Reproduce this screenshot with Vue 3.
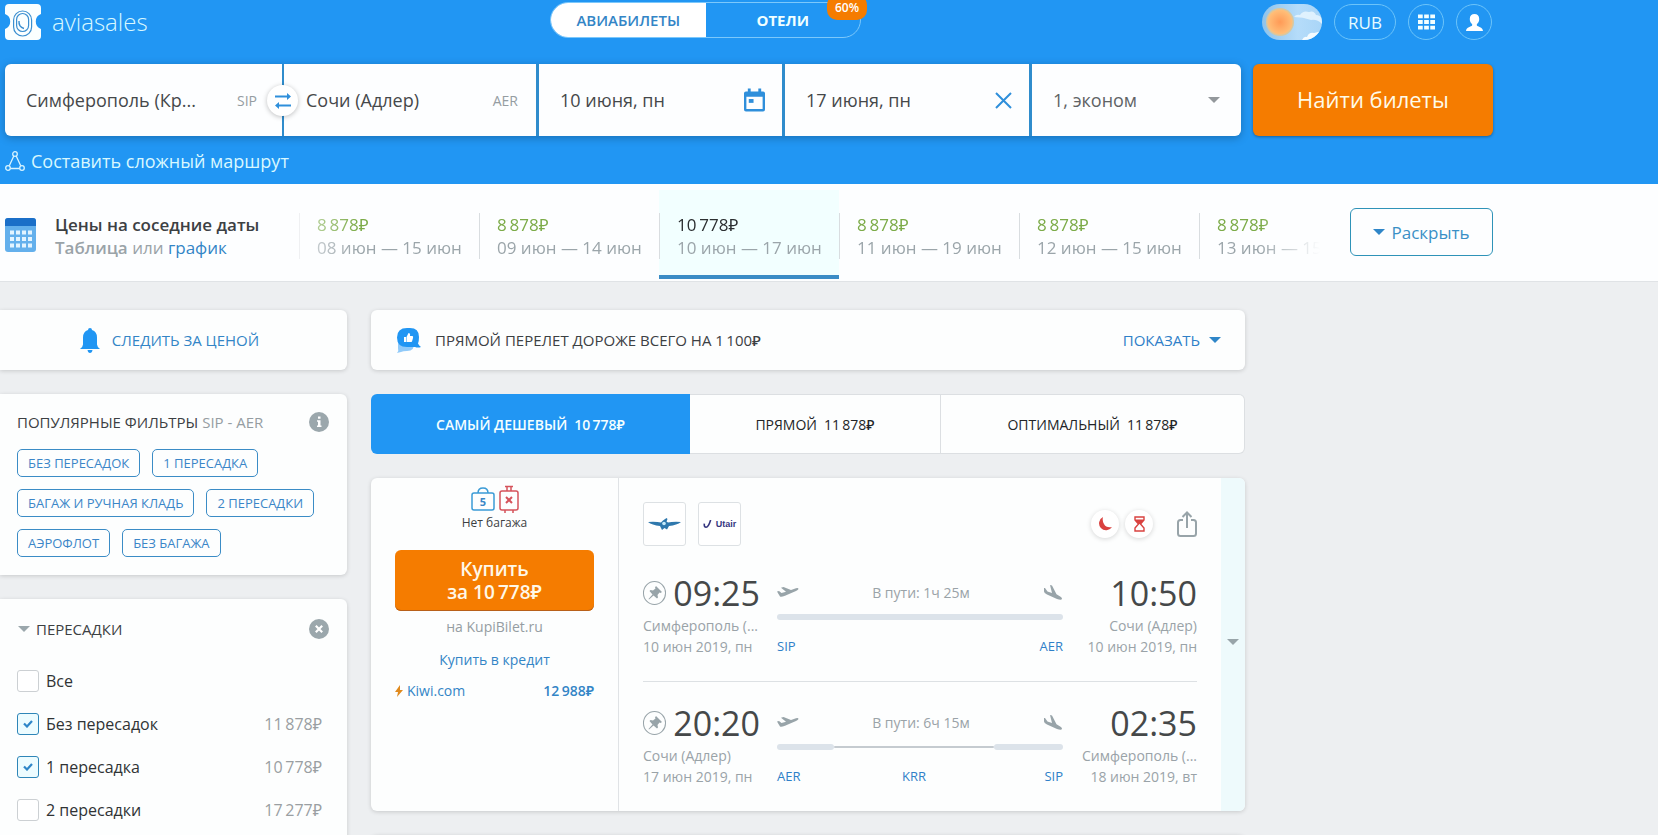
<script setup>
import { ref } from 'vue'

const rub = (n) => n.replace(' ', '\u2009') + '₽'

const nearby = [
  { price: '8 878', dates: '08 июн — 15 июн' },
  { price: '8 878', dates: '09 июн — 14 июн' },
  { price: '10 778', dates: '10 июн — 17 июн', active: true },
  { price: '8 878', dates: '11 июн — 19 июн' },
  { price: '8 878', dates: '12 июн — 15 июн' },
  { price: '8 878', dates: '13 июн — 15' },
]

const chips = ['Без пересадок', '1 пересадка', 'Багаж и ручная кладь', '2 пересадки', 'Аэрофлот', 'Без багажа']

const stops = ref([
  { id: 'all', label: 'Все', price: '', on: false },
  { id: 's0', label: 'Без пересадок', price: '11 878', on: true },
  { id: 's1', label: '1 пересадка', price: '10 778', on: true },
  { id: 's2', label: '2 пересадки', price: '17 277', on: false },
])

const sorts = [
  { name: 'Самый дешевый', price: '10 778', kind: 'cheap' },
  { name: 'Прямой', price: '11 878', kind: 'direct' },
  { name: 'Оптимальный', price: '11 878', kind: 'best' },
]

const segments = [
  {
    from: { time: '09:25', city: 'Симферополь (...', date: '10 июн 2019, пн' },
    to: { time: '10:50', city: 'Сочи (Адлер)', date: '10 июн 2019, пн' },
    duration: 'В пути: 1ч 25м',
    legs: [{ share: 286 }],
    codes: ['SIP', 'AER'],
  },
  {
    from: { time: '20:20', city: 'Сочи (Адлер)', date: '17 июн 2019, пн' },
    to: { time: '02:35', city: 'Симферополь (...', date: '18 июн 2019, вт' },
    duration: 'В пути: 6ч 15м',
    legs: [{ share: 57 }, { share: 160, wait: true }, { share: 69 }],
    codes: ['AER', 'KRR', 'SIP'],
  },
]

const codeColumns = (s) =>
  s.legs.length > 1 ? s.legs.map((l) => `minmax(0, ${l.share}fr)`).join(' ') : '1fr 1fr'

const origin = ref('Симферополь (Кр...')
const destination = ref('Сочи (Адлер)')
const depart = ref('10 июня, пн')
const back = ref('17 июня, пн')
</script>

<template>
  <div class="page">
    <header class="header">
      <div class="wrap">
        <div class="topbar">
          <a class="logo" href="#">
            <svg width="36" height="36" viewBox="0 0 36 36" aria-hidden="true">
              <path d="M4 0H32Q36 0 36 4V10A8 8 0 0 0 36 25V32Q36 36 32 36H4Q0 36 0 32V25A8 8 0 0 0 0 10V4Q0 0 4 0Z" fill="#fbffff" />
              <rect x="8.600" y="7" width="18" height="25" rx="9" fill="none" stroke="#3b8fd0" stroke-width="1.200" />
              <rect x="11.600" y="9.500" width="12" height="18" rx="6" fill="none" stroke="#3b8fd0" stroke-width="1.200" />
              <path d="M14 17q-.5 6 5 7.500" fill="none" stroke="#3b8fd0" stroke-width="1.400" />
            </svg>
            <span>aviasales</span>
          </a>
          <nav class="switch">
            <a class="switch-item on" href="#">АВИАБИЛЕТЫ</a>
            <a class="switch-item" href="#">ОТЕЛИ</a>
            <span class="badge">60%</span>
          </nav>
          <div class="tools">
            <button class="theme" type="button" aria-label="Тема">
              <svg width="60" height="36" viewBox="0 0 60 36">
                <defs>
                  <radialGradient id="sun"><stop offset="0" stop-color="#ff9a56" /><stop offset="1" stop-color="#ffc07a" /></radialGradient>
                  <linearGradient id="sky" x1="0" x2="1" y1="0" y2="0"><stop offset="0" stop-color="#8fc3ea" /><stop offset=".6" stop-color="#b5dcfa" /><stop offset="1" stop-color="#a9d5f7" /></linearGradient>
                  <clipPath id="pill"><rect width="60" height="36" rx="18" /></clipPath>
                </defs>
                <g clip-path="url(#pill)">
                  <rect width="60" height="36" fill="url(#sky)" />
                  <path d="M32 13q2-3 6-2q3-5 9-3q5-2 7 3q4 0 6 4v5q-5-5-11-4q-8-3-17-3z" fill="#e4f4fe" opacity=".9" />
                  <path d="M40 36q2-4 5-3q2-5 7-4l8-2v9z" fill="#f4fbff" />
                  <circle cx="18" cy="18" r="14" fill="#d9c79f" />
                  <circle cx="18" cy="18" r="12.500" fill="url(#sun)" />
                </g>
              </svg>
            </button>
            <button class="currency" type="button">RUB</button>
            <button class="round" type="button" aria-label="Сервисы">
              <svg width="17" height="16" viewBox="0 0 18 16" fill="#f4ffff">
                <path d="M0 0h5v4H0zM6.500 0h5v4h-5zM13 0h5v4h-5zM0 6h5v4H0zM6.500 6h5v4h-5zM13 6h5v4h-5zM0 12h5v4H0zM6.500 12h5v4h-5zM13 12h5v4h-5z" />
              </svg>
            </button>
            <button class="round" type="button" aria-label="Профиль">
              <svg width="17" height="17" viewBox="0 0 18 18" fill="#fff">
                <path d="M9 0c3 0 5 2 5 5.200c0 2.500-1 4.300-2.500 5.500v1.600c1 1.200 6 1.700 6.500 5.700H0c.5-4 5.500-4.500 6.500-5.700v-1.600C5 9.500 4 7.700 4 5.200C4 2 6 0 9 0z" />
              </svg>
            </button>
          </div>
        </div>

        <form class="search" @submit.prevent>
          <div class="fields">
            <label class="field"><input v-model="origin" aria-label="Откуда" /><span class="iata">SIP</span></label>
            <label class="field field-to"><input v-model="destination" aria-label="Куда" /><span class="iata">AER</span></label>
            <label class="field field-date">
              <input v-model="depart" aria-label="Туда" />
              <svg width="21" height="24" viewBox="0 0 22 24">
                <path d="M4 0h3v3h8V0h3v3h2q2 0 2 2v17q0 2-2 2H2q-2 0-2-2V5q0-2 2-2h2zM2.500 8.500v13h17v-13z" fill="#2f8fdb" fill-rule="evenodd" />
                <rect x="5" y="11" width="5" height="4" fill="#2f8fdb" />
              </svg>
            </label>
            <label class="field field-date">
              <input v-model="back" aria-label="Обратно" />
              <svg width="17" height="17" viewBox="0 0 17 17"><path d="M1 1L16 16M16 1L1 16" stroke="#2f8fdb" stroke-width="2" /></svg>
            </label>
            <label class="field field-who">
              <select aria-label="Пассажиры"><option>1, эконом</option></select>
              <svg width="12" height="6" viewBox="0 0 12 6"><path d="M0 0h12L6 6z" fill="#93989c" /></svg>
            </label>
            <button class="swap" type="button" aria-label="Поменять местами">
              <svg width="16" height="16" viewBox="0 0 16 16" fill="#2f8fdb">
                <path d="M0 2.500h12V0l4 3.500L12 7V4.500H0zM16 11.500H4V9L0 12.500L4 16v-2.500h12z" />
              </svg>
            </button>
          </div>
          <button class="find" type="submit">Найти билеты</button>
        </form>

        <a class="complex" href="#">
          <svg width="20" height="20" viewBox="0 0 20 20" fill="none" stroke="#d8f4ff" stroke-width="1.300">
            <circle cx="10" cy="3" r="2.300" /><circle cx="3" cy="17" r="2.300" /><circle cx="17" cy="17" r="2.300" />
            <path d="M8.800 5L4.300 14.800M11.200 5L15.700 14.800M5.500 17.500h9" />
          </svg>
          <span>Составить сложный маршрут</span>
        </a>
      </div>
    </header>

    <section class="dates">
      <div class="wrap dates-row">
        <svg class="cal" width="31" height="34" viewBox="0 0 31 34">
          <rect width="31" height="34" rx="3" fill="#64b0ec" />
          <path d="M3 0H28Q31 0 31 3V8H0V3Q0 0 3 0Z" fill="#1b6fc8" />
          <path d="M5 14.500H27M5 21H27M5 27.500H27" stroke="#e3f4ff" stroke-width="4" stroke-dasharray="4 2" />
        </svg>
        <div class="dates-title">
          <strong>Цены на соседние даты</strong>
          <p><b>Таблица</b> или <a href="#">график</a></p>
        </div>
        <div class="dates-list">
          <button v-for="d in nearby" :key="d.dates" type="button" class="date" :class="{ active: d.active }">
            <span class="date-in"><span class="date-price">{{ rub(d.price) }}</span><span>{{ d.dates }}</span></span>
          </button>
        </div>
        <button class="expand" type="button">
          <svg width="12" height="6" viewBox="0 0 12 6"><path d="M0 0h12L6 6z" fill="#2f86c8" /></svg>
          Раскрыть
        </button>
      </div>
    </section>

    <main class="content">
      <aside class="side">
        <button class="card watch" type="button">
          <svg width="20" height="25" viewBox="0 0 20 25" fill="#2196f3">
            <path d="M10 0q2 0 2 2q5 1.500 5 7.500v7q0 2 3 4.500H0q3-2.500 3-4.500v-7Q3 3.500 8 2q0-2 2-2zM7.500 22h5q-.5 3-2.500 3t-2.500-3z" />
          </svg>
          СЛЕДИТЬ ЗА ЦЕНОЙ
        </button>

        <section class="card popular">
          <div class="card-head">
            <h2>ПОПУЛЯРНЫЕ ФИЛЬТРЫ <span>SIP - AER</span></h2>
            <button class="dot" type="button" aria-label="Справка">
              <svg width="20" height="20" viewBox="0 0 20 20"><circle cx="10" cy="10" r="10" fill="#9ba7ac" /><path d="M9 4.500h2.500v2.200H9zM8 8.300h3.500v5.200h1V15H8v-1.500h1V9.800H8z" fill="#fff" /></svg>
            </button>
          </div>
          <div class="chips">
            <button v-for="c in chips" :key="c" type="button" class="chip">{{ c.toUpperCase() }}</button>
          </div>
        </section>

        <section class="card stops">
          <div class="card-head">
            <svg width="12" height="6" viewBox="0 0 12 6"><path d="M0 0h12L6 6z" fill="#9ba7ac" /></svg>
            <h2>ПЕРЕСАДКИ</h2>
            <button class="dot" type="button" aria-label="Сбросить">
              <svg width="20" height="20" viewBox="0 0 20 20"><circle cx="10" cy="10" r="10" fill="#9ba7ac" /><path d="M6.800 6.800l6.400 6.400M13.200 6.800l-6.400 6.400" stroke="#fff" stroke-width="2.200" /></svg>
            </button>
          </div>
          <div v-for="s in stops" :key="s.id" class="stop">
            <span class="box">
              <input :id="s.id" v-model="s.on" type="checkbox" />
              <svg v-if="s.on" width="10" height="8" viewBox="0 0 10 8"><path d="M1 3.500L4 6.500L9 1" fill="none" stroke="#2f86c8" stroke-width="2.200" /></svg>
            </span>
            <label :for="s.id">{{ s.label }}</label>
            <span v-if="s.price" class="stop-price">{{ rub(s.price) }}</span>
          </div>
        </section>
      </aside>

      <div class="results">
        <section class="card notice">
          <svg width="25" height="25" viewBox="0 0 25 25">
            <path d="M2 14h16q1 9-7 9q-4 0-6 1l-4 1q2-2 1-5z" fill="#90caf9" />
            <path d="M11 0h3q9 0 9 9q0 4-1 6.500q1 2 3 3.500q-3 1-6 0H11Q1 19 1 9.500T11 0z" fill="#2196f3" />
            <path d="M8 9h2v5H8zM10.500 9L12.500 5q2 0 1.500 3h2.500q1 .5.500 2l-1 3.500q-.5.500-1.500.5h-4z" fill="#fff" />
          </svg>
          <span class="notice-text">ПРЯМОЙ ПЕРЕЛЕТ ДОРОЖЕ ВСЕГО НА {{ rub('1 100') }}</span>
          <button class="show" type="button">
            ПОКАЗАТЬ
            <svg width="12" height="6" viewBox="0 0 12 6"><path d="M0 0h12L6 6z" fill="#2f86c8" /></svg>
          </button>
        </section>

        <div class="sorts">
          <button v-for="s in sorts" :key="s.kind" type="button" class="sort" :class="s.kind">
            <span>{{ s.name.toUpperCase() }}</span><span>{{ rub(s.price) }}</span>
          </button>
        </div>

        <article class="card ticket">
          <div class="offer">
            <div class="bags">
              <svg width="24" height="24" viewBox="0 0 24 24" fill="none" stroke="#3a9bd6" stroke-width="1.500">
                <rect x="1" y="6" width="22" height="17" rx="2" /><path d="M7 6q0-5 5-5t5 5" />
                <text x="12" y="18.500" text-anchor="middle" class="bag-num">5</text>
              </svg>
              <svg width="20" height="28" viewBox="0 0 20 28" fill="none" stroke="#d5535b" stroke-width="1.500">
                <rect x="1" y="6" width="18" height="19" rx="2" /><path d="M6 1.500h8M8 2v4M12 2v4M6 25v3M14 25v3" /><path d="M7 12l6 6M13 12l-6 6" stroke-width="2" />
              </svg>
            </div>
            <p class="nobag">Нет багажа</p>
            <button class="buy" type="button">Купить<br />за {{ rub('10 778') }}</button>
            <p class="agent">на KupiBilet.ru</p>
            <a class="credit" href="#">Купить в кредит</a>
            <a class="alt" href="#">
              <svg width="8" height="12" viewBox="0 0 8 12"><path d="M5 0L0 7h3L2 12L8 5H5z" fill="#e08a1e" /></svg>
              <span>Kiwi.com</span>
              <span class="alt-price">{{ rub('12 988') }}</span>
            </a>
          </div>

          <div class="flight">
            <div class="flight-head">
              <span class="airline">
                <svg width="33" height="12" viewBox="0 0 33 12" fill="#2f78ad">
                  <path d="M0 4q8-.5 13 .5L15 2.500L18.500 0l1 1l-1 2.500l1.500 1q5-1 13-.5q-4 3-12 4l-2 3.500l-2.500-1.500L14 12l-2-4Q4 7 0 4z" />
                  <circle cx="16" cy="5.500" r="1.800" fill="#c8ecfb" />
                </svg>
              </span>
              <span class="airline utair">
                <svg width="9" height="9" viewBox="0 0 10 10" fill="none" stroke="#35357f" stroke-width="1.800"><path d="M1.500 4q-.5 4 2 4T8.500 0" /></svg>
                Utair
              </span>
              <span class="marks">
                <span class="mark">
                  <svg width="14" height="14" viewBox="0 0 14 14"><path d="M5 0A7 7 0 1 0 14 10Q8 11 6 7Q4 4 5 0z" fill="#d9413f" /></svg>
                </span>
                <span class="mark">
                  <svg width="11" height="16" viewBox="0 0 11 16"><path d="M1 1H10V4L6.500 8L10 12V15H1V12L4.500 8L1 4z" fill="#fff" stroke="#d9413f" stroke-width="1.400" /><path d="M1 3.500H10L6.500 8h-2z" fill="#d9413f" /></svg>
                </span>
              </span>
              <button class="share" type="button" aria-label="Поделиться">
                <svg width="20" height="26" viewBox="0 0 20 26" fill="none" stroke="#98a4a9" stroke-width="2">
                  <path d="M6 9H3.500Q1 9 1 11.500V22.500Q1 25 3.500 25H16.500Q19 25 19 22.500V11.500Q19 9 16.500 9H14M10 17V2M5.500 6L10 1.500L14.500 6" />
                </svg>
              </button>
            </div>

            <div v-for="(s, i) in segments" :key="i" class="segment">
              <div class="point">
                <div class="time">
                  <button class="pin" type="button" aria-label="Закрепить">
                    <svg width="14" height="14" viewBox="0 0 14 14" fill="#98a4a9"><path d="M8 0L14 6L12.500 7L11.500 6.500L9.500 9L10 11.500L9 12.500L5.500 9.500L1 13.500L.5 13L4.500 8.500L1.500 5L2.500 4L5 4.500L7.500 2.500L7 1.500z" /></svg>
                  </button>
                  <span>{{ s.from.time }}</span>
                </div>
                <p>{{ s.from.city }}</p>
                <p>{{ s.from.date }}</p>
              </div>
              <div class="path">
                <div class="path-top">
                  <svg width="22" height="11" viewBox="0 0 22 11" fill="#98a4a9"><path d="M0 4.500L2 4L4.500 6L9 4.700L4 .8L6.500 0L14 3L19 1.200Q21.500.6 21.500 2Q21 3.200 19 4L8 8.800Q4 10.500 3 9.500z" /></svg>
                  <span>{{ s.duration }}</span>
                  <svg width="20" height="16" viewBox="0 0 20 16" fill="#98a4a9"><path d="M1 3L2 3L4.500 6.500L9 8L7 0L9 .6L13.500 9.300L18 12Q20 14 18 14.800Q16.500 15 14 14L4 9.500Q1 8 1 6.500z" /></svg>
                </div>
                <div class="legs">
                  <span v-for="(l, k) in s.legs" :key="k" class="leg" :class="{ wait: l.wait }" :style="{ flexGrow: l.share }"></span>
                </div>
                <div class="codes" :style="{ gridTemplateColumns: codeColumns(s) }"><span v-for="c in s.codes" :key="c">{{ c }}</span></div>
              </div>
              <div class="point end">
                <div class="time"><span>{{ s.to.time }}</span></div>
                <p>{{ s.to.city }}</p>
                <p>{{ s.to.date }}</p>
              </div>
            </div>
          </div>

          <button class="more" type="button" aria-label="Подробнее">
            <svg width="12" height="6" viewBox="0 0 12 6"><path d="M0 0h12L6 6z" fill="#98a4a9" /></svg>
          </button>
        </article>

        <article class="card next"></article>
      </div>
    </main>
  </div>
</template>

<style>
body {
  margin: 0;
  background: #edeff1;
}
</style>

<style scoped>
.page,
.page button,
.page input,
.page select {
  font-family: "Open Sans", "Noto Sans", sans-serif;
}
.page {
  height: 100vh;
  overflow: hidden;
  background: #edeff1;
  color: #3c4043;
}
.page *,
.page *::before,
.page *::after {
  box-sizing: border-box;
}
p, h2 {
  margin: 0;
}
a {
  text-decoration: none;
  color: #3385c6;
}
button {
  border: 0;
  background: none;
  padding: 0;
  margin: 0;
  cursor: pointer;
  color: inherit;
}
svg {
  display: block;
  flex: none;
}
.wrap {
  max-width: 1493px;
  padding-left: 5px;
}

.header {
  background: #2196f3;
  padding-bottom: 10px;
}
.topbar {
  display: grid;
  grid-template-columns: 545px 311px 1fr;
  align-items: center;
  height: 64px;
  padding: 0 1px 20px 0;
}
.logo {
  display: flex;
  align-items: center;
  gap: 11px;
  color: #d8f8ff;
  font-size: 24px;
  line-height: 32px;
  font-weight: 300;
}
.switch {
  position: relative;
  display: flex;
  height: 36px;
  margin-bottom: 4px;
  border: 1px solid #7cc8fb;
  border-radius: 18px;
}
.switch-item {
  flex: 1;
  display: flex;
  align-items: center;
  justify-content: center;
  color: #f0ffff;
  font-size: 15px;
  font-weight: 700;
}
.switch-item.on {
  background: #fff;
  color: #3385c6;
  border-radius: 18px 0 0 18px;
  font-weight: 600;
}
.badge {
  position: absolute;
  right: -7px;
  top: -8px;
  width: 40px;
  height: 25px;
  border-radius: 10px;
  background: #f57c00;
  color: #fff;
  font-size: 12px;
  font-weight: 600;
  line-height: 26px;
  text-align: center;
}
.tools {
  display: flex;
  justify-content: flex-end;
  gap: 12px;
}
.currency,
.round {
  display: flex;
  align-items: center;
  justify-content: center;
  height: 36px;
  width: 36px;
  border: 1px solid #6cc4fa;
  border-radius: 18px;
  color: #e8fcff;
}
.currency {
  width: 62px;
  font-size: 17px;
  font-weight: 500;
}

.search {
  display: flex;
  gap: 12px;
  height: 72px;
}
.fields {
  position: relative;
  flex: 1;
  display: grid;
  grid-template-columns: 277fr 254fr 246fr 247fr 212fr;
  background: #2f8ccc;
  border-radius: 6px;
  box-shadow: 0 2px 8px rgba(0, 0, 0, 0.25);
  overflow: hidden;
}
.field {
  display: flex;
  align-items: center;
  min-width: 0;
  padding: 0 25px 0 21px;
  background: #fdfeff;
}
.field-to {
  margin-left: 2px;
  padding-left: 22px;
  padding-right: 18px;
}
.field-date,
.field-who {
  margin-left: 3px;
  padding-right: 17px;
}
.field-who {
  padding-right: 21px;
}
.field input,
.field select {
  flex: 1;
  min-width: 0;
  width: 0;
  padding: 0;
  border: 0;
  outline: 0;
  background: none;
  appearance: none;
  color: #45484a;
  font-size: 18px;
  line-height: 26px;
}
.field select {
  color: #606365;
}
.iata {
  color: #959da2;
  font-size: 14px;
}
.swap {
  position: absolute;
  left: 262px;
  top: 21px;
  display: flex;
  align-items: center;
  justify-content: center;
  width: 31px;
  height: 31px;
  border-radius: 50%;
  background: #fff;
  box-shadow: 0 1px 5px rgba(0, 0, 0, 0.25);
}
.find {
  width: 240px;
  padding-bottom: 2px;
  border-radius: 6px;
  background: #f57c00;
  box-shadow: 0 1px 3px rgba(0, 0, 0, 0.35);
  color: #fffbe8;
  font-size: 22px;
}
.complex {
  display: flex;
  width: fit-content;
  align-items: center;
  gap: 6px;
  height: 26px;
  margin-top: 12px;
  color: #d8f8ff;
  font-size: 18px;
}

.dates {
  background: #fdfeff;
  border-bottom: 1px solid #e0e3e6;
}
.dates-row {
  display: flex;
  align-items: center;
  height: 97px;
}
.cal {
  margin-top: 5px;
}
.dates-title {
  width: 263px;
  padding: 6px 0 0 19px;
  flex: none;
  font-size: 17px;
  line-height: 23px;
  white-space: nowrap;
}
.dates-title strong {
  font-weight: 600;
}
.dates-title p {
  color: #9aa3a8;
}
.dates-title b {
  font-weight: 600;
}
.dates-list {
  flex: 1;
  min-width: 0;
  display: flex;
  height: 97px;
  overflow: hidden;
  mask-image: linear-gradient(90deg, rgba(0, 0, 0, 0.4), #000 60px, #000 calc(100% - 60px), transparent);
}
.date {
  flex: none;
  display: flex;
  align-items: flex-start;
  width: 180px;
  margin: 6px 0 2px;
  padding-top: 23px;
  border-bottom: 4px solid transparent;
  color: #9ba5aa;
  font-size: 17px;
  line-height: 23px;
  text-align: left;
}
.date-in {
  display: flex;
  flex-direction: column;
  padding-left: 17px;
  border-left: 1px solid #d9dde0;
  white-space: nowrap;
}
.date-price {
  color: #7cab48;
}
.date.active {
  background: #f2ffff;
  border-color: #3b8cc6;
}
.date.active .date-price {
  color: #2c2f31;
}
.expand {
  flex: none;
  display: flex;
  align-items: center;
  justify-content: center;
  gap: 6px;
  width: 143px;
  height: 48px;
  margin: 0 0 1px 30px;
  border: 1px solid #2f93b8;
  border-radius: 6px;
  color: #3a90c6;
  font-size: 17px;
}

.content {
  display: flex;
  align-items: flex-start;
  gap: 24px;
  max-width: 1245px;
  padding-top: 28px;
}
.side {
  flex: none;
  width: 347px;
  display: flex;
  flex-direction: column;
  gap: 24px;
}
.results {
  flex: 1;
  min-width: 0;
  display: flex;
  flex-direction: column;
  gap: 24px;
}
.card {
  background: #fdfefe;
  border-radius: 6px;
  box-shadow: 0 1px 4px rgba(0, 0, 0, 0.16);
}
.side .card {
  border-radius: 0 6px 6px 0;
}
.watch {
  display: flex;
  align-items: center;
  justify-content: center;
  gap: 12px;
  height: 60px;
  padding-right: 8px;
  color: #3385c6;
  font-size: 15px;
}
.popular {
  padding: 18px 18px 18px 17px;
}
.card-head {
  display: flex;
  align-items: center;
}
.card-head h2 {
  flex: 1;
  font-size: 15px;
  line-height: 20px;
  font-weight: 400;
}
.card-head h2 span {
  color: #959da2;
}
.chips {
  display: flex;
  flex-wrap: wrap;
  gap: 12px;
  margin-top: 17px;
}
.chip {
  height: 28px;
  padding: 0 10px;
  border: 1px solid #3b8cc6;
  border-radius: 5px;
  color: #3b86c8;
  font-size: 13px;
}
.stops {
  padding: 20px 18px 24px 17px;
}
.stops .card-head {
  gap: 6px;
  padding-left: 1px;
  margin-bottom: 20px;
}
.stop {
  display: flex;
  align-items: center;
  gap: 7px;
  height: 43px;
  padding-right: 7px;
  color: #303335;
  font-size: 16px;
}
.box {
  display: grid;
  place-items: center;
}
.box > * {
  grid-area: 1 / 1;
}
.box svg {
  pointer-events: none;
}
.box input {
  appearance: none;
  width: 22px;
  height: 22px;
  margin: 0;
  border: 1px solid #ccd0d3;
  border-radius: 3px;
  background: #fff;
}
.box input:checked {
  border-color: #2f86b8;
  background: #edfcff;
}
.stop label {
  flex: 1;
}
.stop-price {
  color: #9a9fa2;
}

.notice {
  display: flex;
  align-items: center;
  height: 60px;
  padding: 0 24px 0 25px;
  font-size: 15px;
}
.notice-text {
  flex: 1;
  margin-left: 14px;
  font-weight: 500;
}
.show {
  display: flex;
  align-items: center;
  gap: 9px;
  color: #2f80c8;
  font-size: 15px;
  font-weight: 500;
}
.sorts {
  display: grid;
  grid-template-columns: 319fr 251fr 304fr;
  height: 60px;
}
.sort {
  display: flex;
  align-items: center;
  justify-content: center;
  gap: 7px;
  border: 1px solid #dcdfe2;
  border-left: 0;
  background: #fdfefe;
  color: #222527;
  font-size: 14px;
  font-weight: 500;
}
.sort.cheap {
  border: 0;
  border-radius: 6px 0 0 6px;
  background: #2196f3;
  color: #f4ffff;
  font-weight: 600;
}
.sort.best {
  border-radius: 0 6px 6px 0;
}

.ticket {
  display: flex;
  overflow: hidden;
}
.offer {
  flex: none;
  width: 248px;
  padding: 7px 24px 0;
  border-right: 1px solid #e0e3e6;
  display: flex;
  flex-direction: column;
  text-align: center;
  font-size: 14px;
  line-height: 22px;
}
.bags {
  display: flex;
  justify-content: center;
  align-items: center;
  gap: 4px;
  height: 28px;
}
.bag-num {
  fill: #3a86c6;
  stroke: none;
  font-size: 11px;
  font-weight: 700;
}
.nobag {
  margin-top: 2px;
  font-size: 12px;
  line-height: 16px;
}
.buy {
  margin-top: 19px;
  height: 61px;
  border-radius: 6px;
  background: #f57c00;
  box-shadow: inset 0 -1px 0 #b8601a;
  color: #fff8e8;
  font-size: 19px;
  font-weight: 600;
  line-height: 23px;
}
.agent {
  margin-top: 5px;
  color: #959da2;
}
.credit {
  margin-top: 11px;
}
.alt {
  display: flex;
  align-items: center;
  gap: 4px;
  margin-top: 9px;
}
.alt-price {
  margin-left: auto;
  font-weight: 600;
}
.flight {
  flex: 1;
  min-width: 0;
  padding: 24px;
}
.flight-head {
  display: flex;
  align-items: center;
  height: 44px;
  margin-bottom: 23px;
}
.airline {
  display: flex;
  align-items: center;
  justify-content: center;
  gap: 4px;
  width: 43px;
  height: 44px;
  margin-right: 12px;
  border: 1px solid #dde1e4;
  border-radius: 3px;
  background: #fff;
}
.utair {
  color: #35357f;
  font-family: "Liberation Sans", sans-serif;
  font-size: 9px;
  font-weight: 700;
}
.marks {
  display: flex;
  gap: 6px;
  margin-left: auto;
}
.mark {
  display: flex;
  align-items: center;
  justify-content: center;
  width: 28px;
  height: 28px;
  border-radius: 50%;
  background: #fff;
  box-shadow: 0 1px 5px rgba(0, 0, 0, 0.16);
}
.share {
  margin-left: 24px;
}
.segment {
  display: grid;
  grid-template-columns: 117px minmax(0, 1fr) 117px;
  column-gap: 17px;
  color: #9aa3a8;
  font-size: 14px;
  line-height: 21px;
  white-space: nowrap;
}
.segment + .segment {
  margin-top: 24px;
  padding-top: 17px;
  border-top: 1px solid #dde1e4;
}
.time {
  display: flex;
  align-items: center;
  gap: 7px;
  height: 46px;
  padding-top: 2px;
  color: #454849;
  font-size: 34px;
}
.pin {
  display: flex;
  align-items: center;
  justify-content: center;
  width: 24px;
  height: 24px;
  border: 1px solid #98a4a9;
  border-radius: 50%;
}
.end {
  text-align: right;
}
.end .time {
  justify-content: flex-end;
}
.path-top {
  display: flex;
  align-items: center;
  justify-content: space-between;
  height: 45px;
  padding-top: 2px;
}
.legs {
  display: flex;
  align-items: center;
  height: 6px;
}
.leg {
  flex-basis: 0;
  height: 6px;
  border-radius: 3px;
  background: #dce3ea;
}
.leg.wait {
  height: 2px;
  background: #c5cbd0;
}
.codes {
  display: grid;
  margin-top: 16px;
  color: #2f80c8;
  font-size: 13px;
  line-height: 20px;
  text-align: center;
}
.codes span:first-child {
  text-align: left;
}
.codes span:last-child {
  text-align: right;
}
.more {
  flex: none;
  width: 24px;
  padding-bottom: 5px;
  background: #eefafc;
  display: flex;
  align-items: center;
  justify-content: center;
}
.next {
  height: 333px;
}
</style>
